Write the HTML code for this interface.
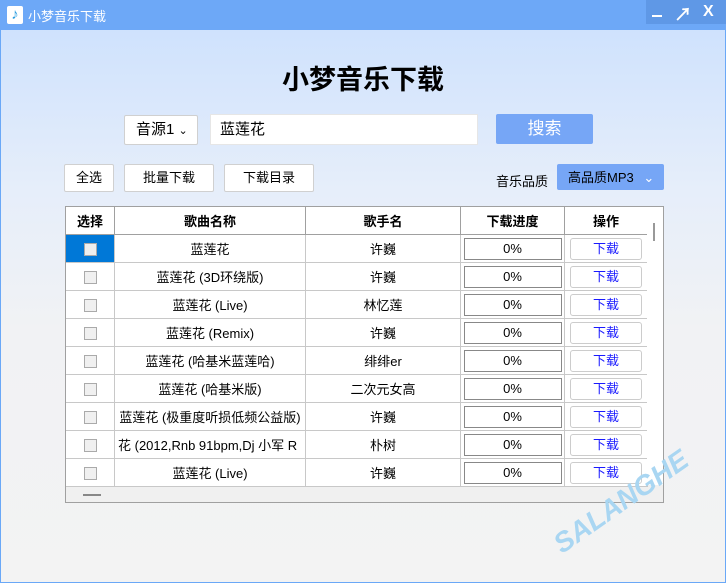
<!DOCTYPE html><html><head><meta charset="utf-8"><style>
*{margin:0;padding:0;box-sizing:border-box}
body{width:726px;height:583px;overflow:hidden;font-family:"Liberation Sans","Noto Sans CJK SC",sans-serif;font-size:13px;color:#000;position:relative;background:linear-gradient(#cfe2fd 30px,#e6eefa 190px,#f1f2f4 330px,#f3f3f3)}
.a{position:absolute}
.tb{left:0;top:0;width:726px;height:30px;background:#6da8f7;color:#fff;font-size:13px}
.btn{background:#fff;border:1px solid #d0d0d0;border-radius:2px;text-align:center;line-height:25px;font-size:13px}
table{border-collapse:collapse;table-layout:fixed;font-size:13px;margin:-1px 0 0 -1px}
td,th{border:1px solid #c8c8c8;text-align:center;height:28px;white-space:nowrap;overflow:hidden;background:#fff}
th{border-color:#a0a0a0;font-weight:bold;height:28px}
.cb{display:inline-block;width:13px;height:13px;border:1px solid #aaa;background:#f0f0f0;vertical-align:middle}
.pg{display:block;margin:0 auto;width:98px;height:22px;border:1px solid #888;line-height:20px}
.dl{display:block;margin:0 auto;width:72px;height:22px;border:1px solid #ccc;border-radius:3px;color:#1a1aff;line-height:20px}
</style></head><body>
<div class="a" style="left:0;top:0;width:726px;height:583px;border:1px solid #6aa8f7"></div>
<div class="a tb"><div class="a" style="left:7px;top:6px;width:16px;height:18px;background:#fff;border-radius:2px;color:#2a9de0;font-size:15px;line-height:18px;text-align:center;font-weight:bold">♪</div><div class="a" style="left:28px;top:6px">小梦音乐下载</div>
<div class="a" style="left:646px;top:0;width:80px;height:24px;background:#5f98e6"></div>
<div class="a" style="left:652px;top:15px;width:10px;height:2px;background:#fff"></div>
<div class="a" style="left:674px;top:1px;font-size:18px;font-weight:bold">↗</div>
<div class="a" style="left:703px;top:3px;font-size:16px;font-weight:bold">X</div></div>
<div class="a" style="left:0;top:58px;width:726px;text-align:center;font-size:27px;font-weight:bold">小梦音乐下载</div>
<div class="a btn" style="left:124px;top:115px;width:74px;height:30px;line-height:28px;text-align:left;padding-left:11px;font-size:15px">音源1 <span style="font-size:11px">⌄</span></div>
<div class="a" style="left:210px;top:114px;width:268px;height:31px;background:#fff;border:1px solid #e6e6e6;font-size:15px;line-height:30px;padding-left:9px">蓝莲花</div>
<div class="a" style="left:496px;top:114px;width:97px;height:30px;background:#76a6f6;border-radius:2px;color:#fff;font-size:17px;text-align:center;line-height:30px">搜索</div>
<div class="a btn" style="left:64px;top:164px;width:50px;height:28px">全选</div>
<div class="a btn" style="left:124px;top:164px;width:90px;height:28px">批量下载</div>
<div class="a btn" style="left:224px;top:164px;width:90px;height:28px">下载目录</div>
<div class="a" style="left:496px;top:171px">音乐品质</div>
<div class="a" style="left:557px;top:164px;width:107px;height:26px;background:#76a6f6;border-radius:2px;line-height:28px;padding-left:11px;font-size:13px">高品质MP3 <span style="color:#fff;margin-left:6px">⌄</span></div>
<div class="a" style="left:65px;top:206px;width:599px;height:297px;border:1px solid #a0a0a0;background:#f0f0f0;overflow:hidden">
<table style="width:582px">
<colgroup><col style="width:49px"><col style="width:191px"><col style="width:155px"><col style="width:104px"><col style="width:83px"></colgroup>
<tr><th>选择</th><th>歌曲名称</th><th>歌手名</th><th>下载进度</th><th>操作</th></tr>
<tr><td style="background:#0078d7"><span class="cb" style="background:#eee"></span></td><td>蓝莲花</td><td>许巍</td><td><span class="pg">0%</span></td><td><span class="dl">下载</span></td></tr>
<tr><td><span class="cb"></span></td><td>蓝莲花 (3D环绕版)</td><td>许巍</td><td><span class="pg">0%</span></td><td><span class="dl">下载</span></td></tr>
<tr><td><span class="cb"></span></td><td>蓝莲花 (Live)</td><td>林忆莲</td><td><span class="pg">0%</span></td><td><span class="dl">下载</span></td></tr>
<tr><td><span class="cb"></span></td><td>蓝莲花 (Remix)</td><td>许巍</td><td><span class="pg">0%</span></td><td><span class="dl">下载</span></td></tr>
<tr><td><span class="cb"></span></td><td>蓝莲花 (哈基米蓝莲哈)</td><td>绯绯er</td><td><span class="pg">0%</span></td><td><span class="dl">下载</span></td></tr>
<tr><td><span class="cb"></span></td><td>蓝莲花 (哈基米版)</td><td>二次元女高</td><td><span class="pg">0%</span></td><td><span class="dl">下载</span></td></tr>
<tr><td><span class="cb"></span></td><td>蓝莲花 (极重度听损低频公益版)</td><td>许巍</td><td><span class="pg">0%</span></td><td><span class="dl">下载</span></td></tr>
<tr><td><span class="cb"></span></td><td style="text-align:left;padding-left:3px">花 (2012,Rnb 91bpm,Dj 小军 R</td><td>朴树</td><td><span class="pg">0%</span></td><td><span class="dl">下载</span></td></tr>
<tr><td><span class="cb"></span></td><td>蓝莲花 (Live)</td><td>许巍</td><td><span class="pg">0%</span></td><td><span class="dl">下载</span></td></tr>
</table>
<div class="a" style="left:581px;top:0;width:17px;height:278px;background:#fff"></div>
<div class="a" style="left:587px;top:16px;width:2px;height:18px;background:#999"></div>
<div class="a" style="left:17px;top:287px;width:18px;height:2px;background:#888"></div>
</div>
<div class="a" style="left:566px;top:528px;font-size:28px;font-weight:bold;font-style:italic;color:#a9d6f2;transform:rotate(-35deg);transform-origin:left bottom;letter-spacing:0px">SALANGHE</div>
</body></html>
